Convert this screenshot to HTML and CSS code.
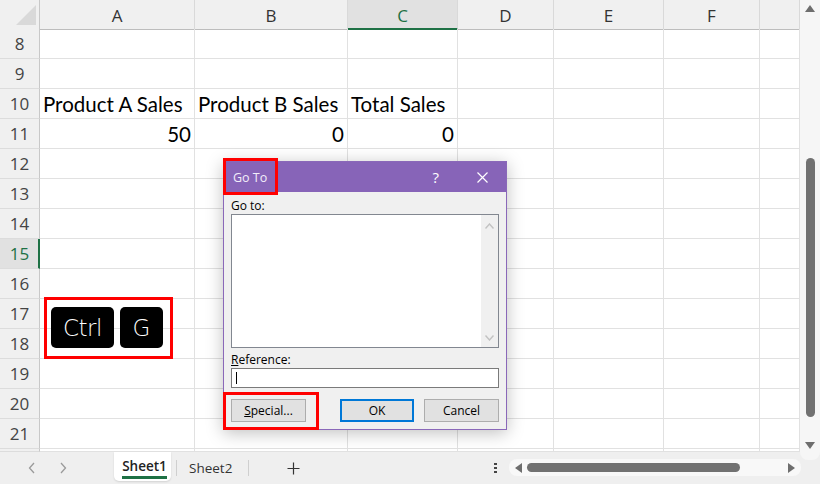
FILE: index.html
```html
<!DOCTYPE html>
<html>
<head>
<meta charset="utf-8">
<title>Go To</title>
<link rel="stylesheet" href="styles.css">
</head>
<body>
<div class="app">
  <div class="main">
    <div class="sheet">
      <div class="row head">
        <div class="corner"><svg width="40" height="29" viewBox="0 0 40 29"><polygon points="36,5 36,25 16,25" fill="#d9d9d9"/></svg></div>
        <div class="ch">A</div><div class="ch">B</div><div class="ch sel">C</div><div class="ch">D</div><div class="ch">E</div><div class="ch">F</div><div class="ch"></div>
      </div>
      <div class="row"><div class="rh">8</div><div class="c"></div><div class="c"></div><div class="c"></div><div class="c"></div><div class="c"></div><div class="c"></div><div class="c"></div></div>
      <div class="row"><div class="rh">9</div><div class="c"></div><div class="c"></div><div class="c"></div><div class="c"></div><div class="c"></div><div class="c"></div><div class="c"></div></div>
      <div class="row"><div class="rh">10</div><div class="c">Product A Sales</div><div class="c">Product B Sales</div><div class="c">Total Sales</div><div class="c"></div><div class="c"></div><div class="c"></div><div class="c"></div></div>
      <div class="row"><div class="rh">11</div><div class="c num">50</div><div class="c num">0</div><div class="c num">0</div><div class="c"></div><div class="c"></div><div class="c"></div><div class="c"></div></div>
      <div class="row"><div class="rh">12</div><div class="c"></div><div class="c"></div><div class="c"></div><div class="c"></div><div class="c"></div><div class="c"></div><div class="c"></div></div>
      <div class="row"><div class="rh">13</div><div class="c"></div><div class="c"></div><div class="c"></div><div class="c"></div><div class="c"></div><div class="c"></div><div class="c"></div></div>
      <div class="row"><div class="rh">14</div><div class="c"></div><div class="c"></div><div class="c"></div><div class="c"></div><div class="c"></div><div class="c"></div><div class="c"></div></div>
      <div class="row"><div class="rh sel">15</div><div class="c"></div><div class="c"></div><div class="c"></div><div class="c"></div><div class="c"></div><div class="c"></div><div class="c"></div></div>
      <div class="row"><div class="rh">16</div><div class="c"></div><div class="c"></div><div class="c"></div><div class="c"></div><div class="c"></div><div class="c"></div><div class="c"></div></div>
      <div class="row"><div class="rh">17</div><div class="c"></div><div class="c"></div><div class="c"></div><div class="c"></div><div class="c"></div><div class="c"></div><div class="c"></div></div>
      <div class="row"><div class="rh">18</div><div class="c"></div><div class="c"></div><div class="c"></div><div class="c"></div><div class="c"></div><div class="c"></div><div class="c"></div></div>
      <div class="row"><div class="rh">19</div><div class="c"></div><div class="c"></div><div class="c"></div><div class="c"></div><div class="c"></div><div class="c"></div><div class="c"></div></div>
      <div class="row"><div class="rh">20</div><div class="c"></div><div class="c"></div><div class="c"></div><div class="c"></div><div class="c"></div><div class="c"></div><div class="c"></div></div>
      <div class="row"><div class="rh">21</div><div class="c"></div><div class="c"></div><div class="c"></div><div class="c"></div><div class="c"></div><div class="c"></div><div class="c"></div></div>
      <div class="row part"><div class="rh"></div><div class="c"></div><div class="c"></div><div class="c"></div><div class="c"></div><div class="c"></div><div class="c"></div><div class="c"></div></div>
    </div>
    <div class="vscroll">
      <svg class="varrow" width="10" height="7" viewBox="0 0 10 7"><polygon points="5,0 10,7 0,7" fill="#6e6e6e"/></svg>
      <div class="vthumb"></div>
      <svg class="varrow down" width="10" height="7" viewBox="0 0 10 7"><polygon points="0,0 10,0 5,7" fill="#6e6e6e"/></svg>
    </div>
  </div>
  <div class="bottombar">
    <svg class="nav first" width="8" height="12" viewBox="0 0 8 12"><polyline points="6,1 1.5,6 6,11" fill="none" stroke="#9a9a9a" stroke-width="1.3"/></svg>
    <svg class="nav" width="8" height="12" viewBox="0 0 8 12"><polyline points="2,1 6.5,6 2,11" fill="none" stroke="#9a9a9a" stroke-width="1.3"/></svg>
    <div class="tab active"><span>Sheet1</span></div>
    <div class="sep"></div>
    <div class="tab">Sheet2</div>
    <div class="sep"></div>
    <svg class="plus" width="13" height="13" viewBox="0 0 13 13"><path d="M6.5 0.5v12M0.5 6.5h12" stroke="#333" stroke-width="1.2"/></svg>
    <div class="dots"><i></i><i></i><i></i></div>
    <div class="htrack">
      <svg width="7" height="10" viewBox="0 0 7 10"><polygon points="7,0 7,10 0,5" fill="#6e6e6e"/></svg>
      <div class="hthumb"></div>
      <svg class="hright" width="7" height="10" viewBox="0 0 7 10"><polygon points="0,0 7,5 0,10" fill="#6e6e6e"/></svg>
    </div>
  </div>

  <div class="keys">
    <div class="key ctrl">Ctrl</div>
    <div class="key g">G</div>
  </div>

  <div class="dialog">
    <div class="titlebar">
      <span class="title">Go To</span>
      <span class="help">?</span>
      <svg class="close" width="11" height="11" viewBox="0 0 11 11"><path d="M0.5 0.5L10.5 10.5M10.5 0.5L0.5 10.5" stroke="#fff" stroke-width="1.2"/></svg>
    </div>
    <div class="dbody">
      <div class="label">Go to:</div>
      <div class="listbox">
        <div class="lscroll">
          <svg width="9" height="6" viewBox="0 0 9 6"><polyline points="0.5,5.5 4.5,1 8.5,5.5" fill="none" stroke="#c2c2c2" stroke-width="1.4"/></svg>
          <svg width="9" height="6" viewBox="0 0 9 6"><polyline points="0.5,0.5 4.5,5 8.5,0.5" fill="none" stroke="#c2c2c2" stroke-width="1.4"/></svg>
        </div>
      </div>
      <div class="label ref"><u>R</u>eference:</div>
      <div class="input"><span class="caret"></span></div>
      <div class="buttons">
        <div class="btn"><u>S</u>pecial...</div>
        <div class="spacer"></div>
        <div class="btn ok">OK</div>
        <div class="btn cancel">Cancel</div>
      </div>
    </div>
  </div>

  <div class="redbox rb-title"></div>
  <div class="redbox rb-special"></div>
</div>
</body>
</html>
```

FILE: styles.css
```css
* { box-sizing: border-box; margin: 0; padding: 0; }
body { width: 820px; height: 484px; overflow: hidden; background: #fff; font-family: "Open Sans", "Noto Sans", sans-serif; }
.app { position: relative; width: 820px; height: 484px; display: flex; flex-direction: column; }
.main { display: flex; height: 452px; }
.sheet { width: 800px; height: 452px; overflow: hidden; }
.row { display: grid; grid-template-columns: 40px 155px 153px 110px 96px 110px 96px 40px; height: 30px; }
.row.head { height: 29px; }
.row.part { height: 3px; }
.corner { background: #f0f0f0; border-right: 1px solid #c8c8c8; border-bottom: 1px solid #bdbdbd; }
.corner svg { display: block; }
.ch { background: #f0f0f0; border-right: 1px solid #d9d9d9; border-bottom: 1px solid #bdbdbd; display: flex; align-items: center; justify-content: center; font-size: 17px; color: #333; padding-top: 1px; }
.ch.sel { background: #e1e1e1; color: #1e7145; border-bottom: 2px solid #1e7145; padding-top: 2px; }
.rh { background: #f0f0f0; border-right: 1px solid #c8c8c8; border-bottom: 1px solid #dcdcdc; display: flex; align-items: center; justify-content: center; font-size: 17px; color: #444; }
.rh.sel { background: #e1e1e1; color: #1e7145; border-right: 2px solid #1e7145; padding-left: 1px; }
.c { border-right: 1px solid #e1e1e1; border-bottom: 1px solid #e1e1e1; display: flex; align-items: center; padding: 0 3px 0 3px; font-family: "Lato", sans-serif; font-size: 20.5px; color: #000; white-space: nowrap; overflow: visible; }
.c.num { justify-content: flex-end; }

.vscroll { flex: 1; background: #f6f6f6; display: flex; flex-direction: column; align-items: center; padding-top: 5px; height: 460px; border-radius: 0 0 8px 8px; position: relative; z-index: 1; }
.varrow { display: block; }
.vthumb { width: 9px; height: 259px; background: #717171; border-radius: 5px; margin-top: 146px; }
.varrow.down { margin-top: 25px; }

.bottombar { flex: 1; background: #efefef; display: flex; align-items: center; font-size: 13.5px; color: #333; }
.nav { display: block; margin-left: 23px; }
.nav.first { margin-left: 28px; }
.tab { height: 29px; display: flex; align-items: center; }
.tab.active { align-self: flex-start; background: #fff; width: 57px; margin-left: 47px; border-radius: 0 0 5px 5px; box-shadow: 0 1px 2px rgba(0,0,0,0.12); justify-content: center; padding-top: 1px; padding-left: 4px; }
.tab.active span { font-weight: 600; color: #222; border-bottom: 3px solid #1e7145; line-height: 17px; padding-bottom: 1px; margin-top: 3px; }
.sep { width: 1px; height: 16px; background: #cfcfcf; margin-left: 5px; }
.tab:not(.active) { margin-left: 12px; margin-right: 11px; }
.plus { display: block; margin-left: 38px; }
.dots { display: flex; flex-direction: column; gap: 2px; margin-left: 194px; }
.dots i { display: block; width: 3px; height: 2px; background: #444; }
.htrack { margin-left: 12px; width: 292px; height: 17px; background: #f8f8f8; border-radius: 8px; display: flex; align-items: center; padding: 0 6px 0 6px; margin-top: -1px; }
.htrack svg { display: block; }
.hthumb { width: 213px; height: 9px; background: #717171; border-radius: 5px; margin-left: 5px; }
.hright { margin-left: auto; }

.keys { position: absolute; left: 44px; top: 297px; width: 129px; height: 62px; border: 3px solid #f00; display: flex; gap: 6px; padding: 7px 0 0 4px; }
.key { background: #000; color: #fff; border-radius: 5px; height: 41px; display: flex; align-items: center; justify-content: center; font-family: "DejaVu Sans", sans-serif; font-weight: 200; font-size: 23px; }
.key.ctrl { width: 63px; letter-spacing: -0.5px; }
.key.g { width: 43px; }

.dialog { position: absolute; left: 223px; top: 161px; width: 284px; height: 269px; border: 1px solid #8a68b9; background: #f0f0f0; box-shadow: 0 3px 16px rgba(0,0,0,0.25); font-size: 12px; color: #000; display: flex; flex-direction: column; }
.titlebar { height: 30px; background: #8764b8; display: flex; align-items: center; color: #fff; padding-left: 9px; }
.title { font-size: 12.5px; color: #f2eefa; }
.help { margin-left: auto; font-size: 15px; margin-right: 38px; }
.close { display: block; margin-right: 18px; }
.dbody { padding: 6px 7px 0 7px; }
.label { height: 16px; line-height: 16px; }
.listbox { height: 134px; background: #fff; border: 1px solid #828790; display: flex; justify-content: flex-end; }
.lscroll { width: 17px; background: #f0f0f0; display: flex; flex-direction: column; align-items: center; justify-content: space-between; padding: 8px 0 6px; }
.lscroll svg { display: block; }
.label.ref { margin-top: 4px; }
.input { height: 20px; background: #fff; border: 1px solid #7a7a7a; padding: 3px 0 0 4px; }
.caret { display: block; width: 1px; height: 12px; background: #000; }
.buttons { display: flex; margin-top: 11px; }
.btn { width: 75px; height: 23px; background: #e1e1e1; border: 1px solid #adadad; display: flex; align-items: center; justify-content: center; }
.spacer { flex: 1; }
.btn.ok { width: 74px; border: 2px solid #0078d7; }
.btn.cancel { margin-left: 10px; }

.redbox { position: absolute; border: 3px solid #f00; }
.rb-title { left: 223px; top: 158px; width: 55px; height: 37px; }
.rb-special { left: 223px; top: 392px; width: 96px; height: 38px; }
```
